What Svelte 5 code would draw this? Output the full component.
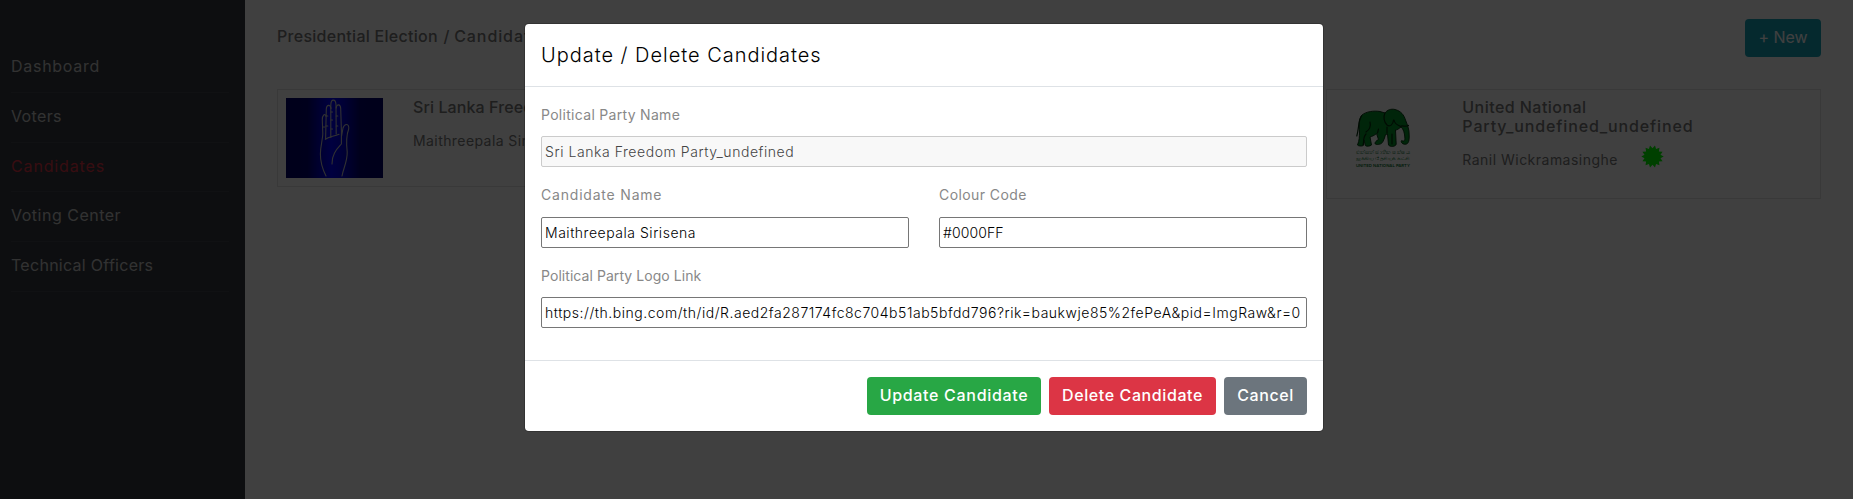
<script>
  const nav = [
    { label: 'Dashboard', ls: 0.72 },
    { label: 'Voters', ls: 0.36 },
    { label: 'Candidates', ls: 0.86, active: true },
    { label: 'Voting Center', ls: 0.5 },
    { label: 'Technical Officers', ls: 0.28 }
  ];
  let partyName = $state('Sri Lanka Freedom Party_undefined');
  let candidate = $state('Maithreepala Sirisena');
  let colour = $state('#0000FF');
  let logo = $state('https://th.bing.com/th/id/R.aed2fa287174fc8c704b51ab5bfdd796?rik=baukwje85%2fePeA&pid=ImgRaw&r=0');

  // Fourteen-pointed badge outline
  const burst = Array.from({ length: 28 }, (_, i) => {
    const r = i % 2 ? 11.2 : 8.2;
    const a = (i * Math.PI) / 14;
    return `${(10.5 + r * Math.sin(a)).toFixed(2)},${(10.5 - r * Math.cos(a)).toFixed(2)}`;
  }).join(' ');
</script>

<div class="app">
  <nav class="sidebar">
    {#each nav as item}
      <a href="#top" class:active={item.active} style="letter-spacing:{item.ls}px">{item.label}</a>
    {/each}
  </nav>

  <main>
    <header class="top">
      <h6>Presidential Election <span class="slash">/</span> <span class="crumb">Candidates</span></h6>
      <button class="btn info">+ New</button>
    </header>

    <section class="cards">
      <article class="card">
        <svg class="logo" viewBox="0 0 97 80" width="97" height="80">
          <defs>
            <linearGradient id="blue">
              <stop offset="0" stop-color="#00006a" />
              <stop offset=".22" stop-color="#000070" />
              <stop offset=".36" stop-color="#0000c8" />
              <stop offset=".47" stop-color="#0000ff" />
              <stop offset=".6" stop-color="#0000d0" />
              <stop offset=".76" stop-color="#000070" />
              <stop offset="1" stop-color="#00006a" />
            </linearGradient>
          </defs>
          <rect width="97" height="80" fill="url(#blue)" />
          <g fill="none" stroke="#c4c4c4" stroke-width="1.1" stroke-linecap="round" stroke-linejoin="round">
            <path d="M40 78C36 70 34.3 64 34.4 56C34.4 48 36.6 42 36.8 36L36.3 22C36.2 17 39 15 40 18" />
            <path d="M39.6 41L40.3 11C40.5 6.500 44.700 6 45 10.500" />
            <path d="M44.800 39.500V7C45 .500 49.700 .500 50 7L50.200 36" />
            <path d="M50.200 10C50.500 5.500 54.500 6 54.700 10.500L55.400 33V46C51 51 45.700 56 46 66" />
            <path d="M39.300 41.200C43 38.500 48 38.500 53 36.200" />
            <path d="M55.600 38L57 30C58.500 25.500 63.500 25 62.700 31C60 38 60.300 46 61.200 54C61.500 63 57.500 70 56 78" />
            <path d="M36.500 29h2M39.800 18h2M39.800 28h2M45 14h1.500M45 22h1.500M45 31h1.500M50.300 18h1.500M50.300 28h1.500" />
          </g>
        </svg>
        <div class="info-col">
          <h6 class="party-a">Sri Lanka Freedom</h6>
          <p class="person-a">Maithreepala Sirisena</p>
        </div>
      </article>

      <article class="card last">
        <svg class="logo" viewBox="0 0 97 80" width="97" height="80">
          <rect width="97" height="80" fill="#fff" />
          <path fill="#009428" stroke="#002c0b" stroke-width=".9" stroke-linejoin="round"
            d="M27 17C31 13.500 39 12.500 45 13.500L50 15C52 12 56 10.500 60 11.500C66 13 69 17 70.500 22C72 26 74.500 31 74.200 38C74.300 44 73 46.500 69.500 46.300C66.500 46 65.500 43 66.800 42.500C68.500 43.500 70.300 43.500 69.800 39C69.500 35 68.500 31 66 29C63.500 31 62 32 60.500 32L61.200 46C61 49 54.500 49 53.500 47L52.500 36L50.500 36.500C50 39 49.200 41 48 43.500C46.500 46.500 43 46.800 40.800 46.300C39 45.500 40.500 43 43.500 41.500L41.500 35.500C39.500 37.500 36.500 38.500 35 39L36.500 47C35 48.500 31 48.500 30.300 47.500L29 42L27.800 47.800C26.500 48.300 23 48 22.500 47C24.500 42 24.300 39 24.500 34C23.800 27 23.500 21 27 17Z" />
          <g fill="none" stroke="#002c0b" stroke-width="1.200" stroke-linecap="round">
            <path d="M26.500 18C23 23 24 31 21.800 38M50 15C48 19 49 24 52 27C55 29 58 27 58.500 22M31 36C28 39 28.500 43 28.500 47M43.500 31L42.500 35M66 28C68 27.500 71.500 29 73.500 27.500M59 22C60 27 63 27 66 28.500M52 29V35M57 36V46M35 24C36 28 34 32 31 34" />
          </g>
          <g fill="#00702a" text-anchor="middle">
            <text x="48" y="56" font-size="5.200" textLength="54" lengthAdjust="spacingAndGlyphs">එක්සත් ජාතික පක්ෂය</text>
            <text x="48" y="62" font-size="4.800" textLength="54" lengthAdjust="spacingAndGlyphs">ஐக்கிய தேசியக் கட்சி</text>
            <text x="48" y="68.700" font-size="3.900" font-weight="600" textLength="54" lengthAdjust="spacingAndGlyphs">UNITED NATIONAL PARTY</text>
          </g>
        </svg>
        <div class="info-col">
          <h6><span class="party-b">United National</span> <span class="party-c">Party_undefined_undefined</span></h6>
          <div class="person-row">
            <p class="person-b">Ranil Wickramasinghe</p>
            <svg class="badge" width="21" height="21" viewBox="0 0 21 21"><polygon points={burst} fill="#00ff00" /></svg>
          </div>
        </div>
      </article>
    </section>
  </main>
</div>

<div class="backdrop">
  <div class="modal" role="dialog" aria-label="Update / Delete Candidates">
    <div class="modal-head">Update / Delete Candidates</div>
    <div class="modal-body">
      <label class="l1"><span>Political Party Name</span><input disabled bind:value={partyName} /></label>
      <div class="pair">
        <label class="l2"><span>Candidate Name</span><input bind:value={candidate} /></label>
        <label class="l3"><span>Colour Code</span><input bind:value={colour} /></label>
      </div>
      <label class="l4"><span>Political Party Logo Link</span><input bind:value={logo} /></label>
    </div>
    <div class="modal-foot">
      <button class="btn success">Update Candidate</button>
      <button class="btn danger">Delete Candidate</button>
      <button class="btn secondary">Cancel</button>
    </div>
  </div>
</div>

<style>
  :global(body) { overflow: hidden; }
  :global(*) { box-sizing: border-box; }
  .app, .backdrop { font-family: Inter, 'Open Sans', sans-serif; font-size: 16px; }
  .app { display: flex; height: 499px; background: #fff; }
  h6, p { margin: 0; }
  h6 { font-size: 16px; font-weight: 500; line-height: 19.200px; color: #777; }

  .sidebar { width: 245px; padding: 43px 16px 0 11px; background: #343a40; }
  .sidebar a {
    display: block; height: 49.750px; padding-top: 11px; line-height: 24px;
    border-bottom: 1px solid #40464b; color: #c8c8c8; text-decoration: none; white-space: nowrap;
  }
  .sidebar a.active { color: #dc3545; }

  main { flex: 1; padding: 19px 32px 0; }
  .top { display: flex; justify-content: space-between; align-items: flex-start; height: 70px; }
  .top h6 { padding-top: 8px; letter-spacing: 0.280px; }
  .slash { margin-left: 1px; }
  .crumb { letter-spacing: 0.900px; }

  .btn {
    height: 38px; padding: 0 0 1px; border: 0; border-radius: 4px; color: #fff;
    font: 500 16px/37px Inter, 'Open Sans', sans-serif; text-align: center; white-space: nowrap;
  }
  .info { width: 76px; background: #17a2b8; font-weight: 400; letter-spacing: -0.100px; }

  .cards { display: grid; grid-template-columns: repeat(3, 1fr); column-gap: 30px; align-items: start; }
  .card { display: flex; height: 98px; padding: 8px; border: 1px solid #e3e3e3; }
  .card.last { grid-column: 3; height: 110px; }
  .logo { flex: none; display: block; margin-right: 30px; font-family: Inter, sans-serif; }
  .info-col { white-space: nowrap; }
  .info-col p { font-size: 14px; line-height: 21px; color: #777; }
  .info-col h6 span { display: block; }
  .party-a { letter-spacing: 0.100px; }
  .person-a { margin-top: 12.500px; letter-spacing: 0.420px; }
  .party-b { letter-spacing: 0.450px; }
  .party-c { letter-spacing: 0.860px; }
  .person-row { display: flex; margin-top: 9.600px; }
  .person-b { padding-top: 3px; width: 180px; letter-spacing: 0.480px; }
  .badge { display: block; overflow: visible; }

  .backdrop {
    position: absolute; inset: 0; padding: 23px 5px 0 0; background: rgba(0, 0, 0, 0.750);
    display: flex; justify-content: center; align-items: flex-start;
  }
  .modal {
    width: 800px; height: 409px; background: #fff; background-clip: padding-box;
    border: 1px solid rgba(0, 0, 0, 0.200); border-radius: 4.800px;
    display: flex; flex-direction: column;
  }
  .modal-head {
    height: 63px; padding: 16px; border-bottom: 1px solid #dee2e6;
    font-size: 20px; font-weight: 300; line-height: 30px; letter-spacing: 0.970px; color: #000;
  }
  .modal-body { flex: 1; padding: 16px; display: flex; flex-direction: column; gap: 16px; }
  label { display: block; height: 64px; font-size: 14px; color: #888; }
  label span { display: block; height: 33px; line-height: 24px; }
  input {
    display: block; width: 100%; height: 31px; padding: 0 3px 1px; border: 1px solid #767676; border-radius: 2px;
    background: #fff; color: #000; font: 300 14px Inter, 'Open Sans', sans-serif; letter-spacing: 0.525px;
  }
  input:disabled { background: #f8f8f8; border-color: #cbcbcb; color: #444; letter-spacing: 0.560px; }
  .pair { display: grid; grid-template-columns: 1fr 1fr; gap: 30px; }
  .pair label { height: 65px; }
  .pair span { height: 34px; }
  .l1 span { letter-spacing: 0.300px; }
  .l2 span { letter-spacing: 0.800px; }
  .l3 span { letter-spacing: 0.420px; }
  .l3 input { letter-spacing: 0.100px; }
  .l4 span { letter-spacing: 0.060px; }
  .modal-foot {
    height: 71px; padding: 16px; border-top: 1px solid #dee2e6;
    display: flex; justify-content: flex-end; gap: 8px;
  }
  .success { width: 174px; background: #28a745; letter-spacing: 0.690px; }
  .danger { width: 167px; background: #dc3545; letter-spacing: 0.600px; }
  .secondary { width: 83px; background: #6c757d; letter-spacing: 0.580px; }
</style>
